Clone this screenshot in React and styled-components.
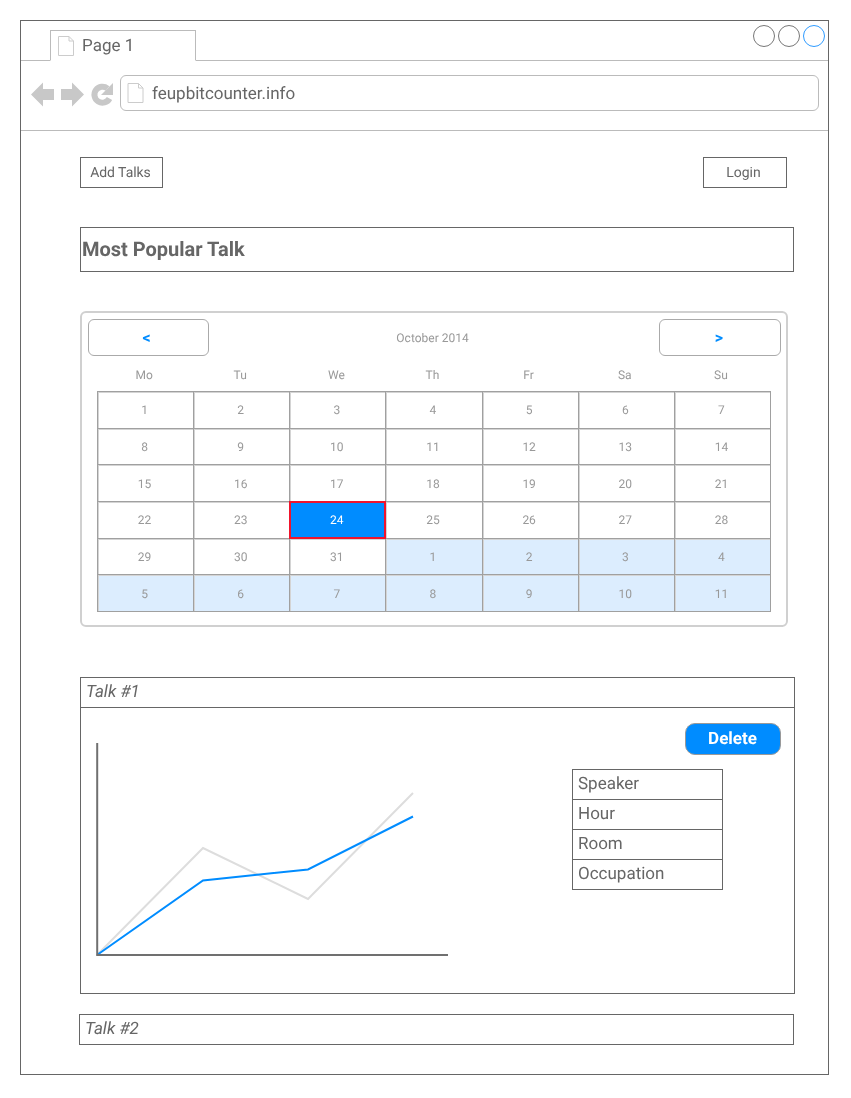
import React from "react";
import styled, { createGlobalStyle } from "styled-components";

const Global = createGlobalStyle`
  html, body { margin: 0; padding: 0; background: #fff; }
  body { font-family: Roboto, "Liberation Sans", sans-serif; color: #666; text-rendering: geometricPrecision; }
  * { box-sizing: border-box; }
`;

const Frame = styled.div`
  width: 809px; height: 1055px; margin: 20px 0 0 20px;
  border: 1px solid #666; background: #fff; will-change: transform;
  display: flex; flex-direction: column;
`;
const TabBar = styled.div`
  height: 40px; padding: 9px 3px 0 29px; border-bottom: 1px solid #bbb;
  display: flex; justify-content: space-between; align-items: flex-start;
`;
const Tab = styled.div`
  width: 146px; height: 31px; margin-bottom: -1px; padding: 5px 0 0 7px;
  border: 1px solid #bbb; border-bottom: 1px solid #fff; background: #fff;
  display: flex; align-items: flex-start; gap: 8px;
  font-size: 17px; line-height: 21px;
`;
const WindowDots = styled.div`
  display: flex; gap: 3px; margin-top: -5px;
`;
const Dot = styled.span`
  width: 22px; height: 22px; border-radius: 50%; background: #fff;
  border: 1px solid ${p => (p.$active ? "#2e9bff" : "#777")};
`;
const AddressRow = styled.div`
  height: 70px; padding: 14px 9px 0 10px; border-bottom: 1px solid #bbb;
  display: flex; align-items: flex-start; gap: 5px;
`;
const NavIcons = styled.svg`
  width: 84px; height: 36px; flex: none;
`;
const AddressBar = styled.div`
  flex: 1; height: 36px; border: 1px solid #bbb; border-radius: 6px;
  display: flex; align-items: center; gap: 8px; padding-left: 6px;
  font-size: 17px; line-height: 21px;
`;
const AddressText = styled.span`
  padding-top: 3px;
`;
const Content = styled.div`
  flex: 1; padding: 26px 33px 0 59px; display: flex; flex-direction: column;
`;
const TopRow = styled.div`
  display: flex; justify-content: space-between; padding-right: 8px;
`;
const TopButton = styled.div`
  width: ${p => p.$w}px; height: 31px; border: 1px solid #666; padding-right: ${p => p.$shift}px;
  display: flex; align-items: center; justify-content: center;
  font-size: 14px; letter-spacing: -.05px;
`;
const Title = styled.h1`
  margin: 39px 1px 0 0; height: 45px; border: 1px solid #666; padding: 0 0 2px 1px;
  display: flex; align-items: center;
  font-size: 20px; font-weight: 700; color: #666;
`;
const Calendar = styled.div`
  margin-top: 39px; width: 708px; height: 316px; padding: 6px 5px 0 6px;
  border: 2px solid #d0d0d0; border-radius: 6px;
`;
const CalHead = styled.div`
  display: flex; justify-content: space-between; align-items: center;
`;
const NavBtn = styled.div`
  width: ${p => p.$w}px; height: 37px; border: 1px solid #aaa; border-radius: 6px;
  display: flex; align-items: center; justify-content: center; padding-right: ${p => p.$shift}px;
  color: #008cff; font-size: 16px; font-weight: 700;
`;
const Month = styled.div`
  font-size: 12px; color: #999; padding: 1px 3px 0 0;
`;
const Weekdays = styled.div`
  margin: 0 9px; width: 674px; height: 35px;
  display: grid; grid-template-columns: repeat(7, 1fr); align-items: center;
  font-size: 12px; color: #999; text-align: center; padding-right: 1px;
`;
const Weekday = styled.div`
  padding: 3px 2px 0 0;
`;
const DayGrid = styled.div`
  margin-left: 9px; width: 674px; height: 221px; background: #a0a0a0; padding: 1px;
  display: grid; gap: 1px; grid-template-columns: repeat(7, 1fr); grid-template-rows: repeat(6, 1fr);
`;
const Day = styled.div`
  display: flex; align-items: center; justify-content: center; padding: 1px 2px 0 0;
  font-size: 12px; position: relative;
  color: ${p => (p.$selected ? "#fff" : "#999")};
  background: ${p => (p.$selected ? "#008cff" : p.$other ? "#dcedfe" : "#fff")};
  box-shadow: inset 1px 1px 0 #d4d4d4;
  ${p => p.$selected && "box-shadow: none; outline: 2px solid #f0142c; outline-offset: -1px; z-index: 1;"}
`;
const TalkCard = styled.section`
  margin-top: 50px; width: 715px; height: 317px; border: 1px solid #666;
  display: flex; flex-direction: column;
`;
const TalkHead = styled.div`
  height: 30px; border-bottom: 1px solid #666; padding: 0 0 2px 5px;
  display: flex; align-items: center;
  font-size: 17px; font-style: italic;
`;
const TalkBody = styled.div`
  flex: 1; display: flex; justify-content: space-between; padding: 15px 13px 0 15px;
`;
const Chart = styled.svg`
  width: 355px; height: 232px; margin-top: 6px; flex: none;
`;
const Side = styled.div`
  display: flex; flex-direction: column; align-items: flex-end;
`;
const DeleteBtn = styled.div`
  width: 96px; height: 32px; border: 1px solid #999; border-radius: 10px; padding-right: 1px;
  background: #008cff; color: #fff; font-size: 17px; font-weight: 700;
  display: flex; align-items: center; justify-content: center;
`;
const InfoTable = styled.div`
  margin: 14px 58px 0 0; width: 151px; border: 1px solid #666;
`;
const InfoRow = styled.div`
  height: 30px; padding-left: 5px; font-size: 17px; line-height: 29px;
  & + & { border-top: 1px solid #666; }
  &:first-child { height: 29px; }
`;
const CollapsedTalk = styled.div`
  margin: 20px 0 0 -1px; width: 715px; height: 31px; border: 1px solid #666;
  padding: 0 0 2px 5px; display: flex; align-items: center;
  font-size: 17px; font-style: italic;
`;

const PageIcon = ({ w = 16, h = 20 }) => (
  <svg width={w} height={h} viewBox="0 0 16 20" style={{ flex: "none" }}>
    <path d="M.5.5H11L15.5 5V19.5H.5Z M11 .5V5H15.5" fill="#fff" stroke="#ccc" />
  </svg>
);

const weeks = [
  [1, 2, 3, 4, 5, 6, 7],
  [8, 9, 10, 11, 12, 13, 14],
  [15, 16, 17, 18, 19, 20, 21],
  [22, 23, 24, 25, 26, 27, 28],
  [29, 30, 31, 1, 2, 3, 4],
  [5, 6, 7, 8, 9, 10, 11],
];

export default function App() {
  return (
    <>
      <Global />
      <Frame>
        <TabBar>
          <Tab><PageIcon />Page 1</Tab>
          <WindowDots>
            <Dot /><Dot /><Dot $active />
          </WindowDots>
        </TabBar>
        <AddressRow>
          <NavIcons viewBox="0 0 84 36">
            <path d="M0 19.5 L12 7.5 V14 H23 V25 H12 V31.5Z" fill="#c8c8c8" />
            <path d="M53 19.5 L41 7.5 V14 H30 V25 H41 V31.5Z" fill="#c8c8c8" />
            <path d="M78.5 23.5 A8 8 0 1 1 76.5 13.5" fill="none" stroke="#c8c8c8" strokeWidth="6" />
            <path d="M82 8 V20 H70Z" fill="#c8c8c8" />
          </NavIcons>
          <AddressBar><PageIcon w={17} h={20} /><AddressText>feupbitcounter.info</AddressText></AddressBar>
        </AddressRow>
        <Content>
          <TopRow>
            <TopButton $w={83} $shift={2}>Add Talks</TopButton>
            <TopButton $w={84} $shift={3}>Login</TopButton>
          </TopRow>
          <Title>Most Popular Talk</Title>
          <Calendar>
            <CalHead>
              <NavBtn $w={121} $shift={4}>&lt;</NavBtn>
              <Month>October 2014</Month>
              <NavBtn $w={122} $shift={2}>&gt;</NavBtn>
            </CalHead>
            <Weekdays>
              {["Mo", "Tu", "We", "Th", "Fr", "Sa", "Su"].map(d => <Weekday key={d}>{d}</Weekday>)}
            </Weekdays>
            <DayGrid>
              {weeks.flatMap((w, i) =>
                w.map((d, j) => (
                  <Day key={`${i}-${j}`} $selected={i === 3 && j === 2} $other={(i === 4 && j > 2) || i === 5}>{d}</Day>
                ))
              )}
            </DayGrid>
          </Calendar>
          <TalkCard>
            <TalkHead>Talk #1</TalkHead>
            <TalkBody>
              <Chart viewBox="0 0 355 232">
                <polyline points="1,226 107,119 212,170 317,64" fill="none" stroke="#ddd" strokeWidth="2" />
                <polyline points="1,226 107,151.5 212,140.5 317,87.5" fill="none" stroke="#008cff" strokeWidth="2" />
                <path d="M1.2 14V226H352" fill="none" stroke="#707070" strokeWidth="2" />
              </Chart>
              <Side>
                <DeleteBtn>Delete</DeleteBtn>
                <InfoTable>
                  <InfoRow>Speaker</InfoRow>
                  <InfoRow>Hour</InfoRow>
                  <InfoRow>Room</InfoRow>
                  <InfoRow>Occupation</InfoRow>
                </InfoTable>
              </Side>
            </TalkBody>
          </TalkCard>
          <CollapsedTalk>Talk #2</CollapsedTalk>
        </Content>
      </Frame>
    </>
  );
}
